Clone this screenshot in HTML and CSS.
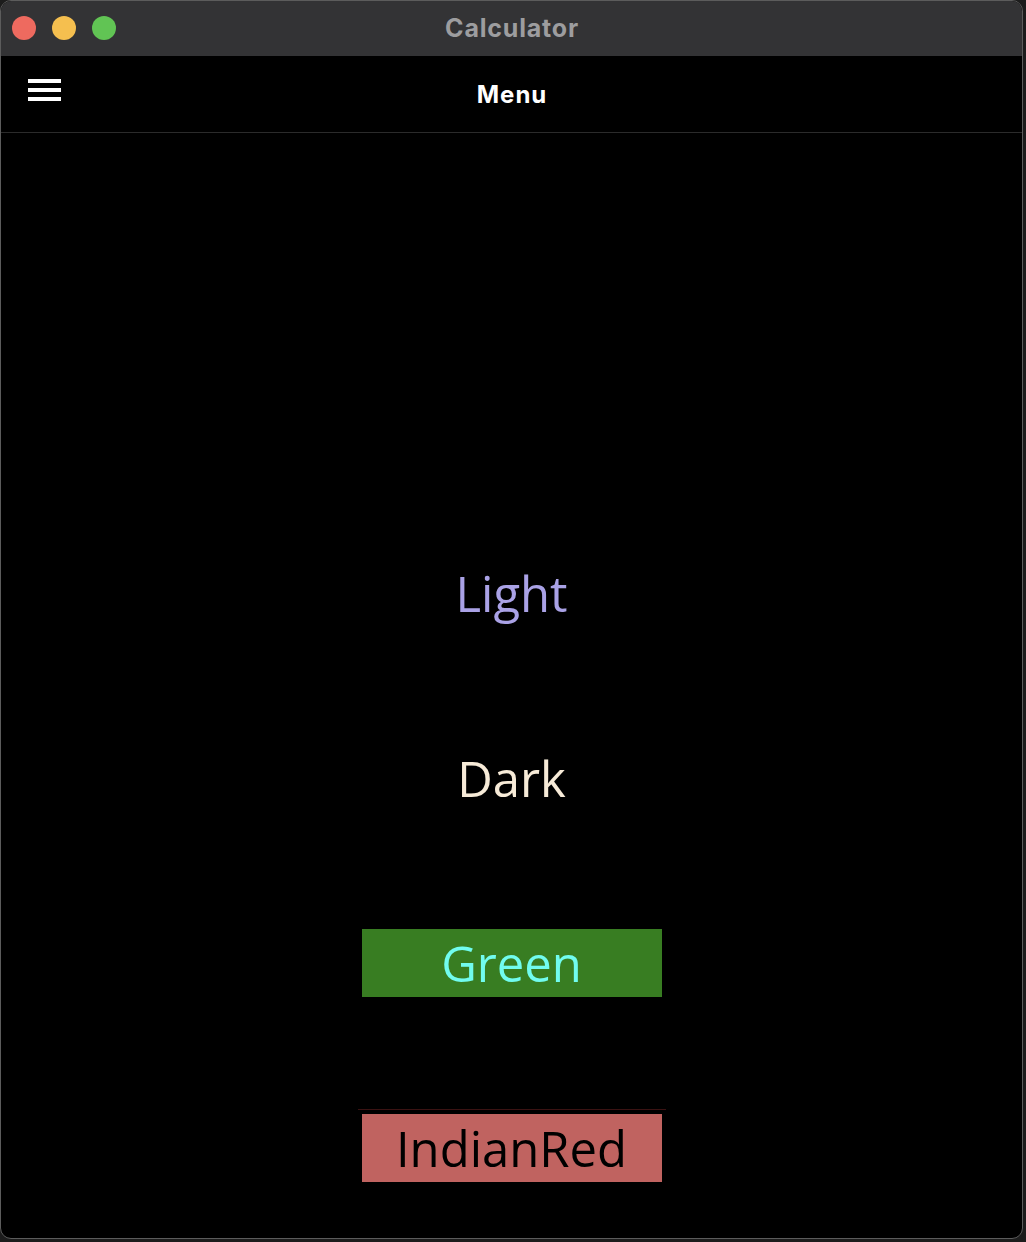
FILE: index.html
```html
<!DOCTYPE html>
<html>
<head>
<meta charset="utf-8">
<link rel="stylesheet" href="styles.css">
</head>
<body>
<div class="window">
  <div class="titlebar">
    <div class="lights">
      <span class="light red"></span>
      <span class="light yellow"></span>
      <span class="light green"></span>
    </div>
    <div class="title">Calculator</div>
  </div>
  <div class="navbar">
    <div class="hamburger"><span></span><span></span><span></span></div>
    <div class="navtitle">Menu</div>
  </div>
  <div class="content">
    <div class="row"><div class="item item-light">Light</div></div>
    <div class="row"><div class="item item-dark">Dark</div></div>
    <div class="row"><div class="item item-green">Green</div></div>
    <div class="row">
      <div class="red-wrap"><div class="item item-red">IndianRed</div></div>
    </div>
  </div>
</div>
</body>
</html>
```
FILE: styles.css
```css
html, body {
  margin: 0;
  padding: 0;
  background: #1c1c1c;
}
.window {
  width: 1021px;
  height: 1237px;
  border: 1px solid #5c5c5c;
  border-radius: 11px;
  overflow: hidden;
  background: #000;
  display: flex;
  flex-direction: column;
}
.titlebar {
  height: 55px;
  background: #333335;
  position: relative;
  display: flex;
  align-items: center;
  justify-content: center;
  flex-shrink: 0;
}
.lights {
  position: absolute;
  left: 11px;
  top: 15px;
  display: flex;
  gap: 16px;
}
.light {
  width: 24px;
  height: 24px;
  border-radius: 50%;
  display: block;
}
.light.red { background: #ee6a5f; }
.light.yellow { background: #f5bf4f; }
.light.green { background: #61c454; }
.title {
  font-family: Inter, "Liberation Sans", Arial, sans-serif;
  font-weight: 700;
  font-size: 25px;
  letter-spacing: 0.8px;
  color: #9d9d9f;
  margin-top: -2px;
  margin-left: 1px;
}
.navbar {
  height: 76px;
  border-bottom: 1px solid #2b2b2b;
  position: relative;
  display: flex;
  align-items: center;
  justify-content: center;
  flex-shrink: 0;
}
.hamburger {
  position: absolute;
  left: 27px;
  top: 23px;
  display: flex;
  flex-direction: column;
  gap: 5px;
}
.hamburger span {
  display: block;
  width: 33px;
  height: 4px;
  background: #fff;
}
.navtitle {
  font-family: Inter, "Liberation Sans", Arial, sans-serif;
  font-weight: 700;
  font-size: 24px;
  letter-spacing: 1px;
  color: #fff;
  margin-top: 1px;
  margin-left: 1px;
}
.content {
  flex: 1;
  display: flex;
  flex-direction: column;
  justify-content: flex-end;
}
.row {
  height: 185px;
  box-sizing: border-box;
  padding-top: 5px;
  display: flex;
  align-items: center;
  justify-content: center;
}
.item {
  font-family: "Open Sans", sans-serif;
  font-size: 49px;
  width: 300px;
  height: 68px;
  display: flex;
  align-items: center;
  justify-content: center;
  line-height: 1;
}
.item-light { color: #aaa2e6; }
.item-dark { color: #f7ebd8; }
.item-green {
  background: #387d22;
  color: #71fcef;
}
.red-wrap {
  width: 308px;
  border-top: 1px solid #3a1212;
  padding-top: 4px;
  margin-top: -5px;
  display: flex;
  justify-content: center;
}
.item-red {
  background: #c06360;
  color: #000;
}
```
